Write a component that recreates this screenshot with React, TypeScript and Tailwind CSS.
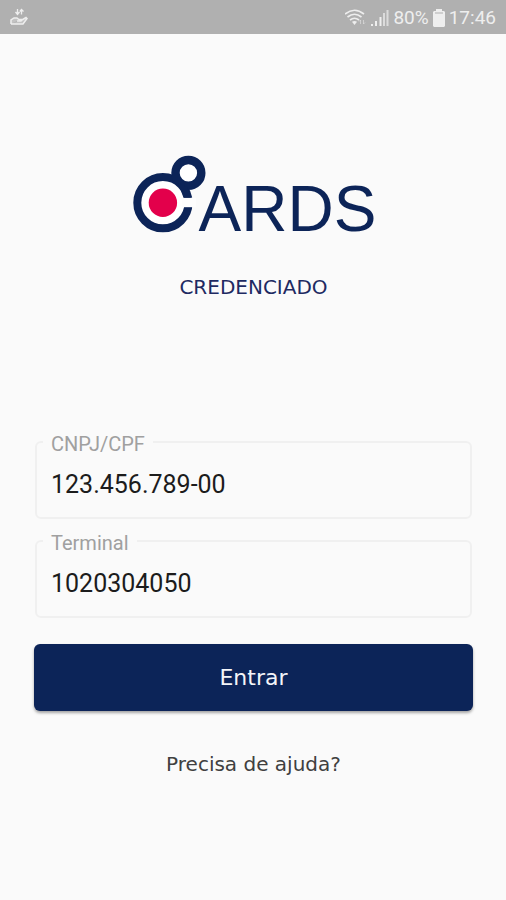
type FieldProps = {
  id: string
  label: string
  defaultValue: string
}

function StatusBar() {
  return (
    <header className="flex h-[34px] items-center justify-between bg-[#b0b0b0] px-[10px] font-['Roboto',sans-serif] text-[#eeeeee]">
      <svg viewBox="0 0 18 18" className="h-[18px] w-[18px]" fill="none" stroke="currentColor" strokeWidth="1.5" aria-hidden="true">
        <path d="M7.500 1v5M5.500 4l2 2.500 2-2.500M11.500 6.500V1.500M9.800 3.500l1.700-2 2 2" strokeWidth="1.300" />
        <path d="M1 16v-4l3-2h3l2 1.500h3l-1 1.500H7M12 12l4-2.500 1 1L13 16H1" fill="currentColor" fillOpacity="0.3" />
      </svg>
      <div className="flex items-center gap-1 pt-0.5 text-[19px] leading-6">
        <svg viewBox="0 0 22 18" className="h-[18px] w-[22px]" fill="none" stroke="currentColor" strokeWidth="1.600" aria-hidden="true">
          <path d="M0 5Q9.500-2.500 19 5M2.500 8Q9.500 2.500 16.500 8M5 11Q9.500 7.500 14 11" />
          <path d="M7 12.700Q9.500 11.200 12 12.700L9.500 16z" fill="currentColor" stroke="none" />
          <path d="M15.500 15v-4M14 12.500l1.500-1.500M18.500 11v4M20 13.500L18.500 15" strokeWidth="1" opacity="0.5" />
        </svg>
        <svg viewBox="0 0 18 18" className="h-[18px] w-[18px]" fill="currentColor" aria-hidden="true">
          <path d="M0 15h2v2H0zM4 12h2v5H4zM8.500 8h2v9h-2z" />
          <path d="M12 4h2v13h-2zM15.500 1h2v16h-2z" opacity="0.7" />
        </svg>
        <span>80%</span>
        <svg viewBox="0 0 12 18" className="h-[18px] w-3" fill="currentColor" aria-hidden="true">
          <path d="M3 0h6v2h2l1 1v14l-1 1H1l-1-1V3l1-1h2z" />
          <path d="M2 3.500h8v1H2z" fill="#b0b0b0" />
        </svg>
        <span>17:46</span>
      </div>
    </header>
  )
}

function Logo() {
  return (
    <h1 className="flex items-end justify-center text-[#0c2458]" aria-label="CARDS">
      <svg viewBox="0 0 76 78" className="h-[78px] w-[76px]" aria-hidden="true">
        {/* letter C, cut open on the right */}
        <circle cx="31.900" cy="47.700" r="25.600" fill="#ffffff" stroke="currentColor" strokeWidth="8" />
        <path d="M51 42.700h14v9.500H51z" fill="#fdfdfd" />
        <circle cx="31.900" cy="47.700" r="14.200" fill="#e3004b" />
        {/* small ring */}
        <circle cx="57.400" cy="17.900" r="12.900" fill="#ffffff" stroke="currentColor" strokeWidth="8.400" />
        <path d="M47 28l9 4 4 10.700h-7.500z" fill="currentColor" />
      </svg>
      <span className="-ml-2 font-['Liberation_Sans',sans-serif] text-[64px] leading-12">ARDS</span>
    </h1>
  )
}

function Field({ id, label, defaultValue }: FieldProps) {
  return (
    <fieldset className="rounded-md border-2 border-[#f0f0f0] px-[6px] pb-[3px] font-['Roboto',sans-serif]">
      <legend className="px-2 pt-1 text-[20px] leading-5 text-[#a0a0a0]">
        <label htmlFor={id}>{label}</label>
      </legend>
      <input
        id={id}
        type="text"
        inputMode="numeric"
        defaultValue={defaultValue}
        className="block h-[60px] w-full bg-transparent px-2 text-[25px] text-[#1c1c1c] outline-none"
      />
    </fieldset>
  )
}

export default function App() {
  return (
    <div className="min-h-screen bg-[#fafafa] font-['DejaVu_Sans',sans-serif]">
      <StatusBar />
      <main className="pr-[33px] pl-[34px] pt-[121px]">
        <Logo />
        <p className="mt-10 text-center text-[20px] leading-7 text-[#1e2a62]">CREDENCIADO</p>

        <form className="mt-[129px]" onSubmit={(e) => e.preventDefault()}>
          <div className="space-y-[10px] px-px">
            <Field id="document" label="CNPJ/CPF" defaultValue="123.456.789-00" />
            <Field id="terminal" label="Terminal" defaultValue="1020304050" />
          </div>
          <button
            type="submit"
            className="mt-[26px] h-[67px] w-full rounded-md bg-[#0c2458] text-[22px] text-[#f4f5f8] shadow-[0_2px_3px_rgba(0,0,0,0.35)]"
          >
            Entrar
          </button>
        </form>

        <div className="mt-[39px] text-center">
          <a href="#ajuda" className="text-[20px] leading-7 text-[#404040]">
            Precisa de ajuda?
          </a>
        </div>
      </main>
    </div>
  )
}
